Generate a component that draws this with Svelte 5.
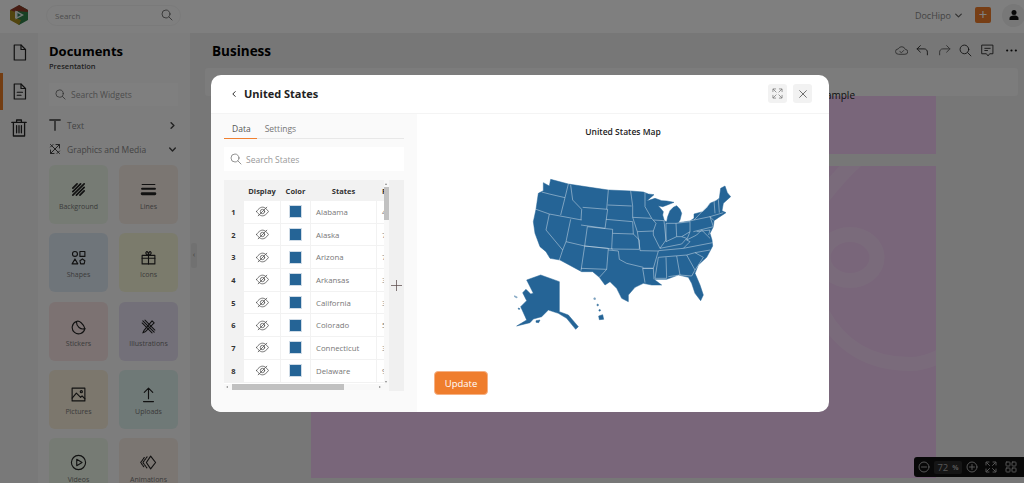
<script>
  const states = ['Alabama', 'Alaska', 'Arizona', 'Arkansas', 'California', 'Colorado', 'Connecticut', 'Delaware']
  const values = ['4903185', '731545', '7278717', '3017804', '39512223', '5758736', '3565287', '973764']

  const widgets = [
    { label: 'Background', bg: '#ecf6e8', icon: '<path d="M4 10 10 4M4 15 15 4M4 20 20 4M9 20 20 9M14 20 20 14" stroke-width="2.4"/>' },
    { label: 'Lines', bg: '#f7ece4', icon: '<path d="M3 5h18" stroke-width="1.5"/><path d="M3 11h18" stroke-width="3"/><path d="M3 18h18" stroke-width="4"/>' },
    { label: 'Shapes', bg: '#dfeaf5', icon: '<circle cx="7" cy="7" r="3.5"/><rect x="14" y="3.5" width="7" height="7"/><path d="M7 14 11 21H3Z"/><path d="M17.500 14 21 16.500 20 21H15L14 16.500Z"/>' },
    { label: 'Icons', bg: '#f7f6d9', icon: '<rect x="3" y="9" width="18" height="12"/><path d="M3 13h18M12 9v12"/><path d="M12 9C9 8 7 6 9 4 11 3 12 6 12 9 12 6 13 3 15 4 17 6 15 8 12 9Z"/>' },
    { label: 'Stickers', bg: '#f8e4e4', icon: '<path d="M9 5A9 9 0 1 0 21 15C15 17 9 12 9 5Z"/><path d="M9 5C13 3 19 8 21 15"/>' },
    { label: 'Illustrations', bg: '#e6e0f2', icon: '<path d="M4 4 20 20M7 3 21 17M3 7 17 21" stroke-width="1.500"/><path d="M17 4 6 17 4 21 8 19 20 7Z" stroke-width="1.500"/>' },
    { label: 'Pictures', bg: '#f8eeda', icon: '<rect x="3" y="3" width="18" height="18"/><circle cx="16" cy="8" r="1.500"/><path d="M3 17 9 10 15 16 17 14 21 18"/>' },
    { label: 'Uploads', bg: '#dff2ee', icon: '<path d="M12 18V3M6 9l6-6 6 6M5 22h14"/>' },
    { label: 'Videos', bg: '#ecf6e8', icon: '<circle cx="12" cy="12" r="10"/><path d="M9.500 7.500 17 12 9.500 16.500Z"/>' },
    { label: 'Animations', bg: '#f7ece4', icon: '<path d="M15 3 22 12 15 21 9 12Z"/><path d="M10 4 4 12 10 20M6 5 1 12 6 19" stroke-dasharray="2 1.500"/>' }
  ]

  const statePaths = `M95 66 118 72 165 83 152 135M78 118 118 132 215 150M118 132 108 180 158 240 148 270M182 148 168 215 224 228 213 302M168 215 158 240
    M175 42 165 83M182 45 188 90 215 118 213 150M218 112 293 118 285 175 213 165M295 60 290 118M232 170 224 228 308 237M232 170 308 178 305 237
    M224 228 295 235 290 298M213 295 290 298 268 322M305 237 388 238M295 240 325 243 328 268 350 280 400 292M308 190 370 192 388 210 388 238
    M288 148 368 155 370 192M293 105 365 108M362 63 368 108 368 142 425 145M368 142 382 185 430 183 438 160 425 145M405 110 425 145M405 68 405 110
    M430 150 462 152 468 210 450 235 430 195 430 183M468 160 468 215M468 160 498 160 500 200 468 215M498 160 540 155 540 185 515 200 500 200
    M450 235 515 222 530 205 515 200M445 242 520 235 608 218M382 185 390 238 390 242 445 243 430 295 398 295 405 338M398 295 430 295 432 328
    M445 262 435 325 470 325 468 262M445 262 530 255M500 258 510 315 475 320M530 255 555 300 545 318 510 315M530 255 555 248 580 262 555 300
    M555 248 600 240M520 235 540 215 530 210 560 195 575 180 600 205M540 185 530 210M540 153 552 150 600 140 610 170 550 185M552 150 600 100
    M612 92 615 130M625 88 628 128M600 140 640 128M600 140 612 152M560 185 600 180 596 195`
</script>

<div class="app">
  <header class="topbar">
    <svg class="logo" width="20" height="20" viewBox="0 0 20 20">
      <path d="M10 0 19 5 19 15 10 20 6 14 13 10 8 6Z" fill="#33804a" />
      <path d="M10 0 1 5 1 10 7 6 19 7 19 5Z" fill="#8f3a28" />
      <path d="M1 5 1 15 10 20 12 15 6 13 6 7Z" fill="#a58a1f" />
      <path d="M6.500 5.500 15 10 6.500 14.500Z" fill="#e8efe8" />
      <path d="M8.500 8 12 10 8.500 12Z" fill="#2c7a5a" />
    </svg>
    <div class="topsearch">
      <span>Search</span>
      <svg width="12" height="12" viewBox="0 0 24 24" class="line"><circle cx="10" cy="10" r="8" /><path d="M16 16l6 6" /></svg>
    </div>
    <div class="topright">
      <span class="brand">DocHipo</span>
      <svg width="7" height="7" viewBox="0 0 10 10" class="line"><path d="M1 3l4 4 4-4" /></svg>
      <div class="plus">+</div>
      <div class="user">
        <svg width="12" height="12" viewBox="0 0 24 24" fill="#111"><circle cx="12" cy="7" r="5" /><path d="M3 22v-4c0-3 4-5 9-5s9 2 9 5v4Z" /></svg>
      </div>
    </div>
  </header>

  <div class="body">
    <nav class="rail">
      <div class="railitem">
        <svg width="15" height="17" viewBox="0 0 20 22" class="dark"><path d="M3 1h9l6 6v14H3Z" /><path d="M12 1v6h6" /></svg>
      </div>
      <div class="railitem active">
        <svg width="15" height="17" viewBox="0 0 20 22" class="dark"><path d="M3 1h9l6 6v14H3Z" /><path d="M12 1v6h6M7 12h7M7 16h5" /></svg>
      </div>
      <div class="railitem">
        <svg width="16" height="18" viewBox="0 0 20 22" class="dark"><path d="M1 4h18M7 4V1h6v3M3 4v17h14V4M7 8v9M10 8v9M13 8v9" /></svg>
      </div>
    </nav>

    <aside class="panel">
      <h2>Documents</h2>
      <div class="sub">Presentation</div>
      <div class="widgetsearch">
        <svg width="11" height="11" viewBox="0 0 24 24" class="line"><circle cx="10" cy="10" r="8" /><path d="M16 16l6 6" /></svg>
        <span>Search Widgets</span>
      </div>
      <div class="section">
        <svg width="12" height="12" viewBox="0 0 12 12" class="line"><path d="M1 1h10M6 1v10" /></svg>
        <span>Text</span>
        <svg class="chev line thick" width="7" height="7" viewBox="0 0 10 10"><path d="M3 1l4 4-4 4" /></svg>
      </div>
      <div class="section">
        <svg width="12" height="12" viewBox="0 0 24 24" class="line thick"><path d="M3 3 21 21M21 3 3 21M3 8 8 3M16 21 21 16M14 3h7v7M3 14v7h7" /></svg>
        <span>Graphics and Media</span>
        <svg class="chev line thick" width="7" height="7" viewBox="0 0 10 10"><path d="M1 3l4 4 4-4" /></svg>
      </div>
      <div class="cards">
        {#each widgets as w}
          <div class="card" style="background: {w.bg}">
            <svg width="17" height="17" viewBox="0 0 24 24" class="dark">{@html w.icon}</svg>
            <span>{w.label}</span>
          </div>
        {/each}
      </div>
    </aside>

    <div class="gutter"><div class="handle">‹</div></div>

    <main class="main">
      <div class="titlerow">
        <h1>Business</h1>
        <div class="tools">
          <svg width="13" height="13" viewBox="0 0 24 24" class="line"><path d="M6 19a5 5 0 0 1 0-10 7 7 0 0 1 13 1 4.500 4.500 0 0 1 0 9ZM9 14l3 2 4-4" /></svg>
          <svg width="13" height="13" viewBox="0 0 24 24" class="dark"><path d="M8 3 2 9l6 6M2 9h13c4 0 6 3 6 6v5" /></svg>
          <svg width="13" height="13" viewBox="0 0 24 24" class="line"><path d="M16 3l6 6-6 6M22 9H9c-4 0-6 3-6 6v5" /></svg>
          <svg width="13" height="13" viewBox="0 0 24 24" class="dark"><circle cx="10" cy="10" r="8" /><path d="M16 16l6 6" /></svg>
          <svg width="13" height="13" viewBox="0 0 24 24" class="dark"><path d="M2 2h20v16h-6l-3 4-3-4H2ZM7 8h10M7 12h5" /></svg>
          <svg class="dots" width="13" height="13" viewBox="0 0 24 24" fill="#111"><circle cx="4" cy="12" r="2" /><circle cx="12" cy="12" r="2" /><circle cx="20" cy="12" r="2" /></svg>
        </div>
      </div>
      <div class="formatbar"></div>
      <div class="canvas">
        <div class="page first"><span class="sample">Sample</span></div>
        <div class="page second">
          <svg class="rings" width="625" height="312" viewBox="311 166 625 312" fill="none" stroke="#fff" stroke-opacity="0.2">
            <path d="M862 155Q842 172 822 198" stroke-width="15" />
            <path d="M822 312Q850 364 910 364Q925 364 942 355" stroke-width="14" />
            <ellipse cx="850" cy="257.500" rx="27" ry="23" stroke-width="15" />
          </svg>
        </div>
      </div>
    </main>
  </div>

  <div class="zoombar">
    <svg width="12" height="12" viewBox="0 0 24 24" class="pale"><circle cx="12" cy="12" r="10" /><path d="M7 12h10" /></svg>
    <div class="zoomval"><span>72</span><b>%</b></div>
    <svg class="zplus" width="12" height="12" viewBox="0 0 24 24"><g class="pale"><circle cx="12" cy="12" r="10" /><path d="M7 12h10M12 7v10" /></g></svg>
    <svg class="zfit" width="12" height="12" viewBox="0 0 24 24"><g class="pale"><path d="M2 8V2h6M22 8V2h-6M2 16v6h6M22 16v6h-6M3 3l6 6M21 3l-6 6M3 21l6-6M21 21l-6-6" /></g></svg>
    <svg class="zgrid" width="12" height="12" viewBox="0 0 24 24"><g class="pale"><rect x="2" y="2" width="8" height="8" rx="1.500" /><rect x="14" y="2" width="8" height="8" rx="1.500" /><rect x="2" y="14" width="8" height="8" rx="1.500" /><rect x="14" y="14" width="8" height="8" rx="1.500" /></g></svg>
  </div>

  <div class="overlay">
    <section class="modal">
      <div class="modalhead">
        <svg width="6" height="6" viewBox="0 0 10 10" class="dark"><path d="M7 1 3 5l4 4" /></svg>
        <h3>United States</h3>
        <div class="modalbtns">
          <button aria-label="Expand">
            <svg width="11" height="11" viewBox="0 0 24 24" class="mid"><path d="M2 8V2h6M22 8V2h-6M2 16v6h6M22 16v6h-6M3 3l6 6M21 3l-6 6M3 21l6-6M21 21l-6-6" /></svg>
          </button>
          <button aria-label="Close">
            <svg width="8" height="8" viewBox="0 0 12 12" class="mid"><path d="M1 1l10 10M11 1 1 11" /></svg>
          </button>
        </div>
      </div>
      <div class="modalbody">
        <div class="editor">
          <div class="tabs">
            <span class="tab on">Data</span>
            <span class="tab">Settings</span>
          </div>
          <div class="statesearch">
            <svg width="12" height="12" viewBox="0 0 24 24" class="mid"><circle cx="10" cy="10" r="8" /><path d="M16 16l6 6" /></svg>
            <span>Search States</span>
          </div>
          <div class="sheet">
            <div class="grid">
              <div class="tablewrap">
                <div class="row head">
                  <div class="c num"></div>
                  <div class="c disp">Display</div>
                  <div class="c col">Color</div>
                  <div class="c st">States</div>
                  <div class="c val">Population</div>
                </div>
                {#each states as s, i}
                  <div class="row">
                    <div class="c num">{i + 1}</div>
                    <div class="c disp">
                      <svg width="13" height="11" viewBox="0 0 24 20" class="eye"><path d="M1 10C5 4 9 2 12 2s7 2 11 8c-4 6-8 8-11 8s-7-2-11-8Z" /><circle cx="12" cy="10" r="4" /><path d="M4 18 20 2" /></svg>
                    </div>
                    <div class="c col"><i class="swatch"></i></div>
                    <div class="c st">{s}</div>
                    <div class="c val">{values[i]}</div>
                  </div>
                {/each}
              </div>
              <div class="vbar"><i></i></div>
            </div>
            <div class="hbar"><i></i></div>
          </div>
          <div class="addcol">
            <svg width="11" height="11" viewBox="0 0 12 12" class="plusicon"><path d="M6 0v12M0 6h12" /></svg>
          </div>
        </div>
        <div class="preview">
          <div class="maptitle">United States Map</div>
          <svg class="map" width="230" height="170" viewBox="0 0 690 510">
            <g fill="#256496" stroke="#256496" stroke-width="1.500" stroke-linejoin="round">
              <path d="M100 38 118 48 122 28 175 42 240 52 295 60 362 63 400 66 415 72 432 74 410 93 435 85 455 92 470 93 492 97 472 105 458 110 445 107 460 125 458 135 463 152 470 155 473 140 480 122 490 112 500 107 510 118 515 130 510 150 505 158 540 153 552 145 552 132 578 125 592 112 600 100 618 92 628 85 632 55 645 48 652 68 662 80 640 100 636 122 648 128 625 143 612 152 610 170 600 190 606 210 608 228 590 262 565 285 555 310 570 345 580 375 572 392 555 370 545 340 535 322 505 315 470 328 432 328 455 345 425 345 400 340 375 352 355 375 355 395 335 385 320 355 300 335 285 345 268 322 248 305 215 305 150 270 120 265 108 245 90 230 75 190 70 155 78 118 85 70 100 62Z" />
              <path d="M50 330 92 315 148 335 148 425 175 435 205 470 197 478 170 445 145 430 115 420 95 440 70 447 60 458 20 468 50 450 32 410 50 392 38 368 48 358 62 372 70 370Z" />
              <path d="M266 438 278 434 281 448 268 449Z" />
              <circle cx="269" cy="421" r="2.500" />
              <circle cx="263" cy="405" r="2.500" />
              <circle cx="254" cy="386" r="3" opacity="0.6" />
              <path d="M13 377 22 381 20 384 13 380Z" opacity="0.6" />
              <path d="M24 414 30 416 27 419Z" />
              <path d="M78 452 90 450 86 458 78 457Z" />
            </g>
            <path d={statePaths} fill="none" stroke="#d5e0ea" stroke-width="1.500" />
          </svg>
          <button class="update">Update</button>
        </div>
      </div>
    </section>
  </div>
</div>

<style>
  :global(body) {
    font-family: 'Open Sans', 'Liberation Sans', sans-serif;
  }

  svg {
    flex: none;
    display: block;
  }

  .line, .dark, .eye, .pale, .mid, .plusicon {
    fill: none;
    stroke-linecap: round;
    stroke-linejoin: round;
  }

  .line { stroke: #666; stroke-width: 1.8; }
  .thick { stroke-width: 2; stroke: #444; }
  .dark { stroke: #222; stroke-width: 1.6; }
  .mid { stroke: #666; stroke-width: 1.4; }
  .eye { stroke: #555; stroke-width: 1.5; }
  .pale { stroke: #aaa; stroke-width: 2; }
  .plusicon { stroke: #5a4a4a; stroke-width: 0.8; }

  .app {
    position: relative;
    width: 1024px;
    height: 483px;
    overflow: hidden;
    display: flex;
    flex-direction: column;
    background: #eee;
  }

  .topbar {
    display: flex;
    align-items: center;
    height: 33px;
    flex: none;
    box-sizing: border-box;
    background: #fff;
    padding: 0 0 3px 9px;
  }

  .topsearch {
    display: flex;
    align-items: center;
    justify-content: space-between;
    width: 135px;
    height: 21px;
    margin-left: 17px;
    padding: 0 7px 0 8px;
    box-sizing: border-box;
    border: 1px solid #f4f4f4;
    border-radius: 11px;
    font-size: 8px;
    color: #999;
  }

  .topright {
    display: flex;
    align-items: center;
    margin-left: auto;
    margin-right: -1px;
    font-size: 9px;
    color: #888;
  }

  .brand { margin-right: 4px; }

  .plus {
    width: 16px;
    height: 16px;
    margin: 0 11px 0 13px;
    border-radius: 2px;
    background: #ef7c2a;
    color: #fff;
    font-size: 15px;
    line-height: 15px;
    text-align: center;
  }

  .user {
    width: 23px;
    height: 23px;
    border-radius: 50%;
    background: #f0f0f0;
    display: flex;
    align-items: center;
    justify-content: center;
  }

  .body {
    flex: 1;
    display: flex;
    min-height: 0;
  }

  .rail {
    width: 38px;
    flex: none;
    background: #f2f2f2;
    padding-top: 0;
    display: flex;
    flex-direction: column;
  }

  .railitem {
    height: 38px;
    display: flex;
    align-items: center;
    justify-content: center;
    box-sizing: border-box;
  }

  .railitem.active {
    border-left: 3px solid #e67a25;
    padding-right: 3px;
    margin-top: 2px;
    margin-bottom: -1px;
    height: 37px;
  }

  .panel {
    width: 152px;
    flex: none;
    background: #fafafa;
    padding: 9px 12px 0 11px;
    box-sizing: border-box;
  }

  h2 {
    margin: 0;
    font-size: 13px;
    line-height: 18px;
    font-weight: 700;
    color: #000;
  }

  .sub {
    font-size: 7.500px;
    font-weight: 600;
    color: #444;
    line-height: 11px;
    margin-top: 1px;
  }

  .widgetsearch {
    display: flex;
    align-items: center;
    gap: 5px;
    height: 23px;
    margin: 11px 0 7px;
    padding-left: 6px;
    background: #fff;
    font-size: 8.500px;
    color: #999;
  }

  .section {
    display: flex;
    align-items: center;
    gap: 6px;
    height: 24px;
    font-size: 8.500px;
    color: #888;
  }

  .section .chev { margin-left: auto; margin-right: 2px; }

  .cards {
    display: grid;
    grid-template-columns: 59px 59px;
    grid-auto-rows: 59px;
    column-gap: 11px;
    row-gap: 9.300px;
    margin-top: 4px;
  }

  .card {
    border-radius: 6px;
    display: flex;
    flex-direction: column;
    align-items: center;
    padding-top: 16px;
    box-sizing: border-box;
    gap: 4px;
    font-size: 7px;
    line-height: 9px;
    color: #777;
  }

  .gutter {
    width: 7px;
    flex: none;
    padding-top: 210px;
  }

  .handle {
    width: 6px;
    height: 25px;
    margin-left: 1px;
    border-radius: 2px;
    background: #e2e2e2;
    color: #888;
    font-size: 8px;
    line-height: 22px;
    text-align: center;
  }

  .main {
    flex: 1;
    min-width: 0;
    display: flex;
    flex-direction: column;
  }

  .titlerow {
    display: flex;
    align-items: center;
    justify-content: space-between;
    height: 35px;
    padding: 0 6px 0 15px;
    flex: none;
  }

  h1 {
    margin: 0;
    font-size: 13.500px;
    font-weight: 700;
    color: #000;
  }

  .tools {
    display: flex;
    gap: 8.500px;
    align-items: center;
  }

  .dots { margin-left: 3px; }

  .formatbar {
    height: 28px;
    margin: 0 6px 0 8px;
    background: #f8f8f8;
    border-radius: 3px;
    flex: none;
  }

  .canvas {
    flex: 1;
    padding-left: 114px;
    min-height: 0;
  }

  .page {
    position: relative;
    width: 625px;
    background: #f3cdf5;
  }

  .page.first {
    height: 58px;
    margin-bottom: 12px;
  }

  .page.second {
    height: 312px;
    overflow: hidden;
  }

  .sample {
    position: absolute;
    right: 81px;
    top: -8px;
    font-size: 10px;
    color: #222;
  }

  .rings {
    position: absolute;
    top: 0;
    left: 0;
  }

  .zoombar {
    position: absolute;
    left: 914px;
    top: 457px;
    width: 110px;
    height: 20px;
    box-sizing: border-box;
    padding-left: 4px;
    background: #111;
    border-radius: 3px 0 0 3px;
    display: flex;
    align-items: center;
  }

  .zoomval {
    width: 28px;
    height: 13px;
    margin-left: 4px;
    background: #2a2a2a;
    border-radius: 2px;
    color: #aaa;
    font-size: 9.500px;
    line-height: 13px;
    display: flex;
    justify-content: center;
    gap: 4px;
  }

  .zoomval b { font-size: 7px; }
  .zplus { margin-left: 4px; }
  .zfit { margin-left: 7px; }
  .zgrid { margin-left: 8px; }

  .overlay {
    position: absolute;
    inset: 0;
    background: rgba(0, 0, 0, 0.5);
    padding: 75px 0 0 211px;
  }

  .modal {
    width: 618px;
    height: 337px;
    background: #fff;
    border-radius: 10px;
    overflow: hidden;
    display: flex;
    flex-direction: column;
  }

  .modalhead {
    height: 39px;
    flex: none;
    display: flex;
    align-items: center;
    padding: 0 17px 1px 20px;
    box-sizing: border-box;
    border-bottom: 1px solid #f4f4f4;
  }

  h3 {
    margin: 0 0 0 7px;
    font-size: 11px;
    font-weight: 700;
    color: #222;
  }

  .modalbtns {
    margin-left: auto;
    display: flex;
    gap: 6px;
  }

  .modalbtns button {
    width: 19px;
    height: 19px;
    padding: 0;
    border: none;
    border-radius: 3px;
    background: #f2f2f2;
    display: flex;
    align-items: center;
    justify-content: center;
  }

  .modalbody {
    flex: 1;
    display: flex;
    min-height: 0;
  }

  .editor {
    width: 206px;
    flex: none;
    background: #fafafa;
    padding: 0 13px;
    box-sizing: border-box;
    display: grid;
    grid-template-columns: 165px 15px;
    grid-template-rows: 25px 24px 1fr;
  }

  .tabs {
    grid-column: 1 / 3;
    display: flex;
    border-bottom: 1px solid #e8e8e8;
    font-size: 8.500px;
    color: #777;
    padding-top: 8px;
    line-height: 14px;
  }

  .tab { padding: 0 8px; }
  .tab.on {
    color: #555;
    border-bottom: 1px solid #f08030;
    margin-bottom: -1px;
    padding: 0 6px 0 8px;
  }

  .statesearch {
    grid-column: 1 / 3;
    margin-top: 8px;
    height: 24px;
    display: flex;
    align-items: center;
    gap: 4px;
    padding-left: 6px;
    background: #fff;
    font-size: 8.500px;
    color: #999;
  }

  .sheet {
    margin-top: 17px;
    display: flex;
    flex-direction: column;
    height: 210px;
    background: #fff;
  }

  .grid {
    flex: 1;
    display: flex;
    min-height: 0;
  }

  .tablewrap {
    width: 160px;
    overflow: hidden;
    flex: none;
  }

  .vbar {
    position: relative;
    width: 5px;
    background: #f8f8f8;
    padding-top: 7px;
  }

  .vbar::before, .vbar::after {
    content: '';
    position: absolute;
    left: 1px;
    border-left: 1.500px solid transparent;
    border-right: 1.500px solid transparent;
  }

  .vbar::before {
    top: 3px;
    border-bottom: 2px solid #888;
  }

  .vbar::after {
    bottom: 1px;
    border-top: 2px solid #888;
  }

  .vbar i {
    display: block;
    height: 33px;
    background: #c1c1c1;
  }

  .hbar {
    position: relative;
    height: 6px;
    flex: none;
    padding-left: 8px;
    background: #f8f8f8;
  }

  .hbar::before, .hbar::after {
    content: '';
    position: absolute;
    top: 1.500px;
    border-top: 1.500px solid transparent;
    border-bottom: 1.500px solid transparent;
  }

  .hbar::before {
    left: 2px;
    border-right: 2px solid #888;
  }

  .hbar::after {
    right: 8px;
    border-left: 2px solid #888;
  }

  .hbar i {
    display: block;
    width: 112px;
    height: 6px;
    background: #c1c1c1;
  }

  .row {
    display: flex;
    height: 22.700px;
    width: 200px;
  }

  .row.head {
    height: 21px;
    background: #f2f2f2;
    font-weight: 700;
    color: #333;
  }

  .c {
    display: flex;
    align-items: center;
    justify-content: center;
    box-sizing: border-box;
    border-right: 1px solid #f2f2f2;
    border-bottom: 1px solid #f2f2f2;
    font-size: 7.500px;
    color: #777;
  }

  .row.head .c {
    color: #333;
    border-color: transparent;
    padding-top: 1px;
  }

  .num {
    width: 20px;
    background: #f2f2f2;
    font-weight: 700;
    color: #333;
  }

  .disp { width: 37px; }
  .col { width: 30px; }
  .st {
    width: 66px;
    justify-content: flex-start;
    padding-left: 5px;
    font-size: 7.800px;
  }
  .row.head .st {
    justify-content: center;
    padding-left: 0;
    font-size: 7.500px;
  }
  .val {
    width: 47px;
    justify-content: flex-start;
    padding-left: 5px;
    white-space: nowrap;
  }

  .swatch {
    display: block;
    width: 11px;
    height: 11px;
    background: #256496;
    border: 0.500px solid #cfdbe6;
  }

  .addcol {
    margin-top: 17px;
    height: 211px;
    background: #f0f0f0;
    display: flex;
    align-items: center;
    justify-content: center;
  }

  .preview {
    flex: 1;
    min-width: 0;
    display: flex;
    flex-direction: column;
    padding: 12px 0 17px 17px;
    box-sizing: border-box;
  }

  .maptitle {
    margin-left: -17px;
    text-align: center;
    font-size: 8.500px;
    font-weight: 600;
    color: #222;
    line-height: 12px;
  }

  .map {
    margin: 32px 0 0 76px;
  }

  .update {
    margin-top: auto;
    width: 54px;
    height: 24px;
    padding: 0;
    border: 1px solid #f6b184;
    border-radius: 4px;
    background: #ef7d2d;
    color: #fff;
    font-family: inherit;
    font-size: 9.500px;
    font-weight: 400;
  }
</style>
